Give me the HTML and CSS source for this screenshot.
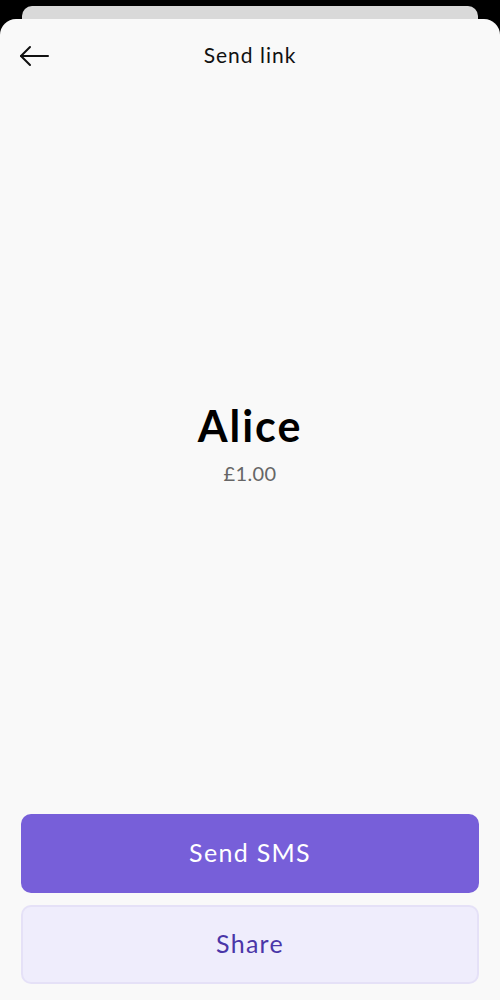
FILE: index.html
```html
<!DOCTYPE html>
<html>
<head>
<meta charset="utf-8">
<link rel="stylesheet" href="styles.css">
</head>
<body>
<div class="stack">
  <div class="back-card"></div>
  <div class="sheet">
    <header class="header">
      <button class="back" aria-label="Back">
        <svg width="30" height="22" viewBox="0 0 30 22" fill="none" stroke="#111" stroke-width="2" stroke-linecap="round" stroke-linejoin="round">
          <path d="M29 11H2"/>
          <path d="M11 2L2 11L11 20"/>
        </svg>
      </button>
      <h1 class="title">Send link</h1>
    </header>
    <main class="content">
      <div class="name">Alice</div>
      <div class="amount">£1.00</div>
    </main>
    <footer class="actions">
      <button class="btn btn-primary">Send SMS</button>
      <button class="btn btn-secondary">Share</button>
    </footer>
  </div>
</div>
</body>
</html>
```
FILE: styles.css
```css
html, body {
  margin: 0;
  padding: 0;
  background: #000;
  height: 1000px;
  overflow: hidden;
  font-family: Lato, "Noto Sans", sans-serif;
}
.stack {
  padding-top: 6px;
  display: flex;
  flex-direction: column;
}
.back-card {
  margin: 0 22px;
  height: 30px;
  background: #d9d9d9;
  border-radius: 10px 10px 0 0;
}
.sheet {
  margin-top: -17px;
  height: 981px;
  background: #f9f9f9;
  border-radius: 16px 16px 0 0;
  display: flex;
  flex-direction: column;
  position: relative;
}
.header {
  height: 71px;
  padding-bottom: 4px;
  display: flex;
  align-items: center;
  justify-content: center;
  position: relative;
}
.back {
  position: absolute;
  left: 19px;
  top: 26px;
  padding: 0;
  border: 0;
  background: none;
  width: 30px;
  height: 22px;
  display: flex;
}
.title {
  margin: 0;
  font-size: 21px;
  font-weight: 400;
  color: #111;
  letter-spacing: 1px;
}
.content {
  flex: 1;
  display: flex;
  flex-direction: column;
  align-items: center;
  justify-content: center;
  padding-bottom: 22px;
}
.name {
  font-size: 43px;
  font-weight: 700;
  color: #000;
  line-height: 52px;
  letter-spacing: 2px;
  margin-bottom: 7px;
}
.amount {
  font-size: 20px;
  color: #666;
  line-height: 28px;
  letter-spacing: 0.4px;
}
.actions {
  padding: 0 21px 16px;
  display: flex;
  flex-direction: column;
  gap: 12px;
}
.btn {
  height: 79px;
  border-radius: 10px;
  font-family: Lato, "Noto Sans", sans-serif;
  font-size: 25px;
  letter-spacing: 1.3px;
  border: 0;
  padding: 0 0 4px;
  cursor: pointer;
}
.btn-primary {
  background: #775fd9;
  color: #fff;
}
.btn-secondary {
  background: #efedfc;
  border: 2px solid #e5e1f7;
  color: #4a36a8;
}
```
